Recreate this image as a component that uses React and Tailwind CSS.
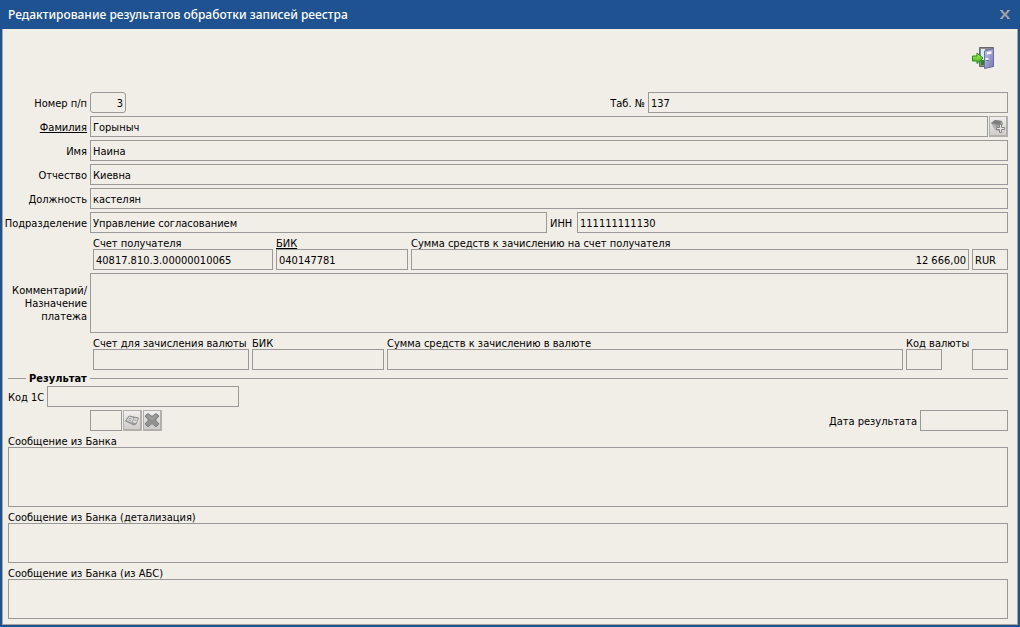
import { useId } from "react";

const box =
  "block min-w-0 border border-[#999] bg-transparent px-0.5 text-[11px] leading-[13px] text-black outline-none";

function Input({ className = "w-full", ...props }) {
  return <input readOnly className={`${box} h-[21px] pt-0.5 ${className}`} {...props} />;
}

// label in the left column, fields to the right of it
function Row({ label, underline, children, ...props }) {
  const id = useId();
  return (
    <div className="flex items-center gap-[3px]">
      <label
        htmlFor={id}
        className={`flex w-[79px] shrink-0 justify-end whitespace-nowrap pt-0.5 ${underline ? "underline" : ""}`}
      >
        {label}
      </label>
      <Input id={id} {...props} />
      {children}
    </div>
  );
}

// label above the field
function Stacked({ label, underline, className = "", inputClass = "w-full", ...props }) {
  const id = useId();
  return (
    <div className={className}>
      <label
        htmlFor={id}
        className={`block h-[13px] whitespace-nowrap leading-[15px] ${underline ? "underline" : ""}`}
      >
        {label}
      </label>
      <Input id={id} className={inputClass} {...props} />
    </div>
  );
}

function Message({ label, className }) {
  const id = useId();
  return (
    <div>
      <label htmlFor={id} className="block h-[13px] leading-[15px]">
        {label}
      </label>
      <textarea
        id={id}
        readOnly
        className={`${box} w-full resize-none ${className}`}
      />
    </div>
  );
}

function ToolButton({ title, children }) {
  return (
    <button
      type="button"
      aria-label={title}
      className="flex h-[21px] w-[19px] shrink-0 items-center justify-center border border-r-2 border-b-2 border-[#b2b0ad] bg-linear-to-b from-[#f0efed] to-[#cfcdca]"
    >
      {children}
    </button>
  );
}

function DoorIcon() {
  return (
    <svg width="24" height="24" viewBox="0 0 24 24">
      <defs>
        <linearGradient id="door" x1="0" y1="0" x2="1" y2="1">
          <stop offset="0" stopColor="#c3c5ee" />
          <stop offset="1" stopColor="#7376ae" />
        </linearGradient>
        <linearGradient id="arrow" x1="0" y1="0" x2="0" y2="1">
          <stop offset="0" stopColor="#b4f060" />
          <stop offset="1" stopColor="#3fae17" />
        </linearGradient>
      </defs>
      <path d="M7.500 .5h14v19h-14z" fill="#8d8d92" stroke="#68686c" />
      <path d="M9 2h4v16H9z" fill="#d5eef7" />
      <path d="M9 13h4v5H9z" fill="#258b20" />
      <path
        d="M12.500 4L21.500 1.500v18L12.500 21.500z"
        fill="url(#door)"
        stroke="#6b6da4"
      />
      <path d="M15 5l4.500-.7v2.500l-4.500.7z" fill="#f7f7ff" />
      <path d="M13.500 12h3" stroke="#eef" strokeWidth="2" />
      <path d="M14.500 13.500h2" stroke="#55578c" />
      <path
        d="M.5 9h4.500V6L11 11l-6 5.500V14H.5z"
        fill="url(#arrow)"
        stroke="#258b14"
      />
    </svg>
  );
}

function BookAddIcon() {
  return (
    <svg width="16" height="16" viewBox="0 0 16 16">
      <path d="M1 5l4-3 7 1 1 3-4 7-4-1z" fill="#a0a0a0" />
      <path d="M1 5l4-3 7 1-3 4-4-1z" fill="#7e7e7e" />
      <path d="M2 7l4 2M3 9l3 2" stroke="#c4c4c4" />
      <path
        d="M9.500 6.500h2v3h3v2h-3v3h-2v-3h-3v-2h3z"
        fill="#e6e6e6"
        stroke="#858585"
      />
    </svg>
  );
}

function BookIcon() {
  return (
    <svg width="16" height="16" viewBox="0 0 16 16">
      <path d="M1.500 9L5 4l9.500 2-2.500 6-2 1z" fill="#9a9a9a" stroke="#8c8c8c" />
      <path d="M2.500 8.500l3-4 4 1.500-2 4.500zM8.500 10.500l2-4.500 3.500.5-2 4.500z" fill="#dcdcdc" />
      <path d="M5 6.500l2.500.5M4.500 8l2.500.8M10.500 8l2 .3" stroke="#999" />
    </svg>
  );
}

function CrossIcon() {
  return (
    <svg width="16" height="16" viewBox="0 0 16 16">
      <path
        d="M4 1.500l4 3 4-3 3 2.500-3.500 4 3.500 4-3 3-4-3.500-4 3.500-3-3 3.500-4-3.500-4z"
        fill="#929292"
        stroke="#7f7f7f"
        strokeLinejoin="round"
      />
      <path d="M3.500 3.500l4.500 3.500 4-3.500" fill="none" stroke="#ababab" />
    </svg>
  );
}

export default function App() {
  return (
    <div className="min-h-screen bg-[#1e5290] px-0.5 pb-0.5 font-['DejaVu_Sans_Condensed','Noto_Sans',sans-serif] text-[11px] leading-[13px] text-black">
      <header className="flex h-[29px] items-center justify-between pr-2 pl-1.5 text-white">
        <h1 className="font-['Noto_Sans',sans-serif] text-[12px] font-medium">
          Редактирование результатов обработки записей реестра
        </h1>
        <button type="button" aria-label="Закрыть">
          <svg width="10" height="9" viewBox="0 0 10 9">
            <path d="M1.500 1l7 7M8.500 1l-7 7" stroke="#a3a3a3" strokeWidth="2" />
            <path d="M0 .5h3M7 .5h3M0 8.500h3M7 8.500h3" stroke="#a3a3a3" />
          </svg>
        </button>
      </header>

      <main className="border border-t-0 border-[#aaa69a] bg-[#f1eee7] pr-[9px] pb-[5px] pl-[5px]">
        <div className="flex h-[63px] justify-end pt-[18px] pr-3">
          <button type="button" aria-label="Выход" className="h-6">
            <DoorIcon />
          </button>
        </div>

        <form>
          <div className="flex flex-col gap-[3px]">
            <div className="flex items-center justify-between">
              <Row label="Номер п/п" className="w-9 rounded-[3px] text-right" defaultValue="3" />
              <div className="flex items-center gap-[3px]">
                <label htmlFor="tab" className="pt-0.5">
                  Таб. №
                </label>
                <Input id="tab" className="w-[360px]" defaultValue="137" />
              </div>
            </div>
            <div className="flex gap-px">
              <div className="flex-1">
                <Row label="Фамилия" underline defaultValue="Горыныч" />
              </div>
              <ToolButton title="Выбрать сотрудника">
                <BookAddIcon />
              </ToolButton>
            </div>
            <Row label="Имя" defaultValue="Наина" />
            <Row label="Отчество" defaultValue="Киевна" />
            <Row label="Должность" defaultValue="кастелян" />
            <Row label="Подразделение" className="flex-1" defaultValue="Управление согласованием">
              <label htmlFor="inn" className="w-6 pt-0.5">
                ИНН
              </label>
              <Input id="inn" className="w-[431px]" defaultValue="111111111130" />
            </Row>

            <div className="flex items-end gap-[3px] pl-[85px]">
              <Stacked label="Счет получателя" className="w-[180px]" defaultValue="40817.810.3.00000010065" />
              <Stacked label="БИК" underline className="w-[132px]" defaultValue="040147781" />
              <Stacked
                label="Сумма средств к зачислению на счет получателя"
                className="min-w-0 flex-1"
                inputClass="w-full text-right"
                defaultValue="12 666,00"
              />
              <Input aria-label="Валюта" className="w-9" defaultValue="RUR" />
            </div>

            <div className="flex items-center gap-[3px]">
              <label htmlFor="comment" className="w-[79px] shrink-0 text-right">
                Комментарий/ Назначение платежа
              </label>
              <textarea id="comment" readOnly className={`${box} h-[60px] flex-1 resize-none`} />
            </div>

            <div className="flex items-end gap-[3px] pl-[85px]">
              <Stacked label="Счет для зачисления валюты" className="w-[156px]" />
              <Stacked label="БИК" className="w-[132px]" />
              <Stacked label="Сумма средств к зачислению в валюте" className="min-w-0 flex-1" />
              <Stacked label="Код валюты" className="w-[63px]" inputClass="w-9" />
              <Input aria-label="Валюта" className="w-9" />
            </div>
          </div>

          <div className="flex h-4 items-center gap-[3px] font-bold">
            <span className="h-px w-[18px] bg-[#999]" />
            <h2>Результат</h2>
            <span className="h-px flex-1 bg-[#999]" />
          </div>

          <div className="flex flex-col gap-[3px]">
            <div className="flex items-center gap-[3px]">
              <label htmlFor="code1c" className="pt-0.5">
                Код 1С
              </label>
              <Input id="code1c" className="w-48" />
            </div>
            <div className="flex items-center gap-px pl-[82px]">
              <Input aria-label="Код результата" className="w-8" />
              <ToolButton title="Выбрать">
                <BookIcon />
              </ToolButton>
              <ToolButton title="Очистить">
                <CrossIcon />
              </ToolButton>
              <div className="ml-auto flex items-center gap-[3px]">
                <label htmlFor="date" className="pt-0.5">
                  Дата результата
                </label>
                <Input id="date" className="w-[88px]" />
              </div>
            </div>
            <Message label="Сообщение из Банка" className="h-[60px]" />
            <Message label="Сообщение из Банка (детализация)" className="h-10" />
            <Message label="Сообщение из Банка (из АБС)" className="h-10" />
          </div>
        </form>
      </main>
    </div>
  );
}
